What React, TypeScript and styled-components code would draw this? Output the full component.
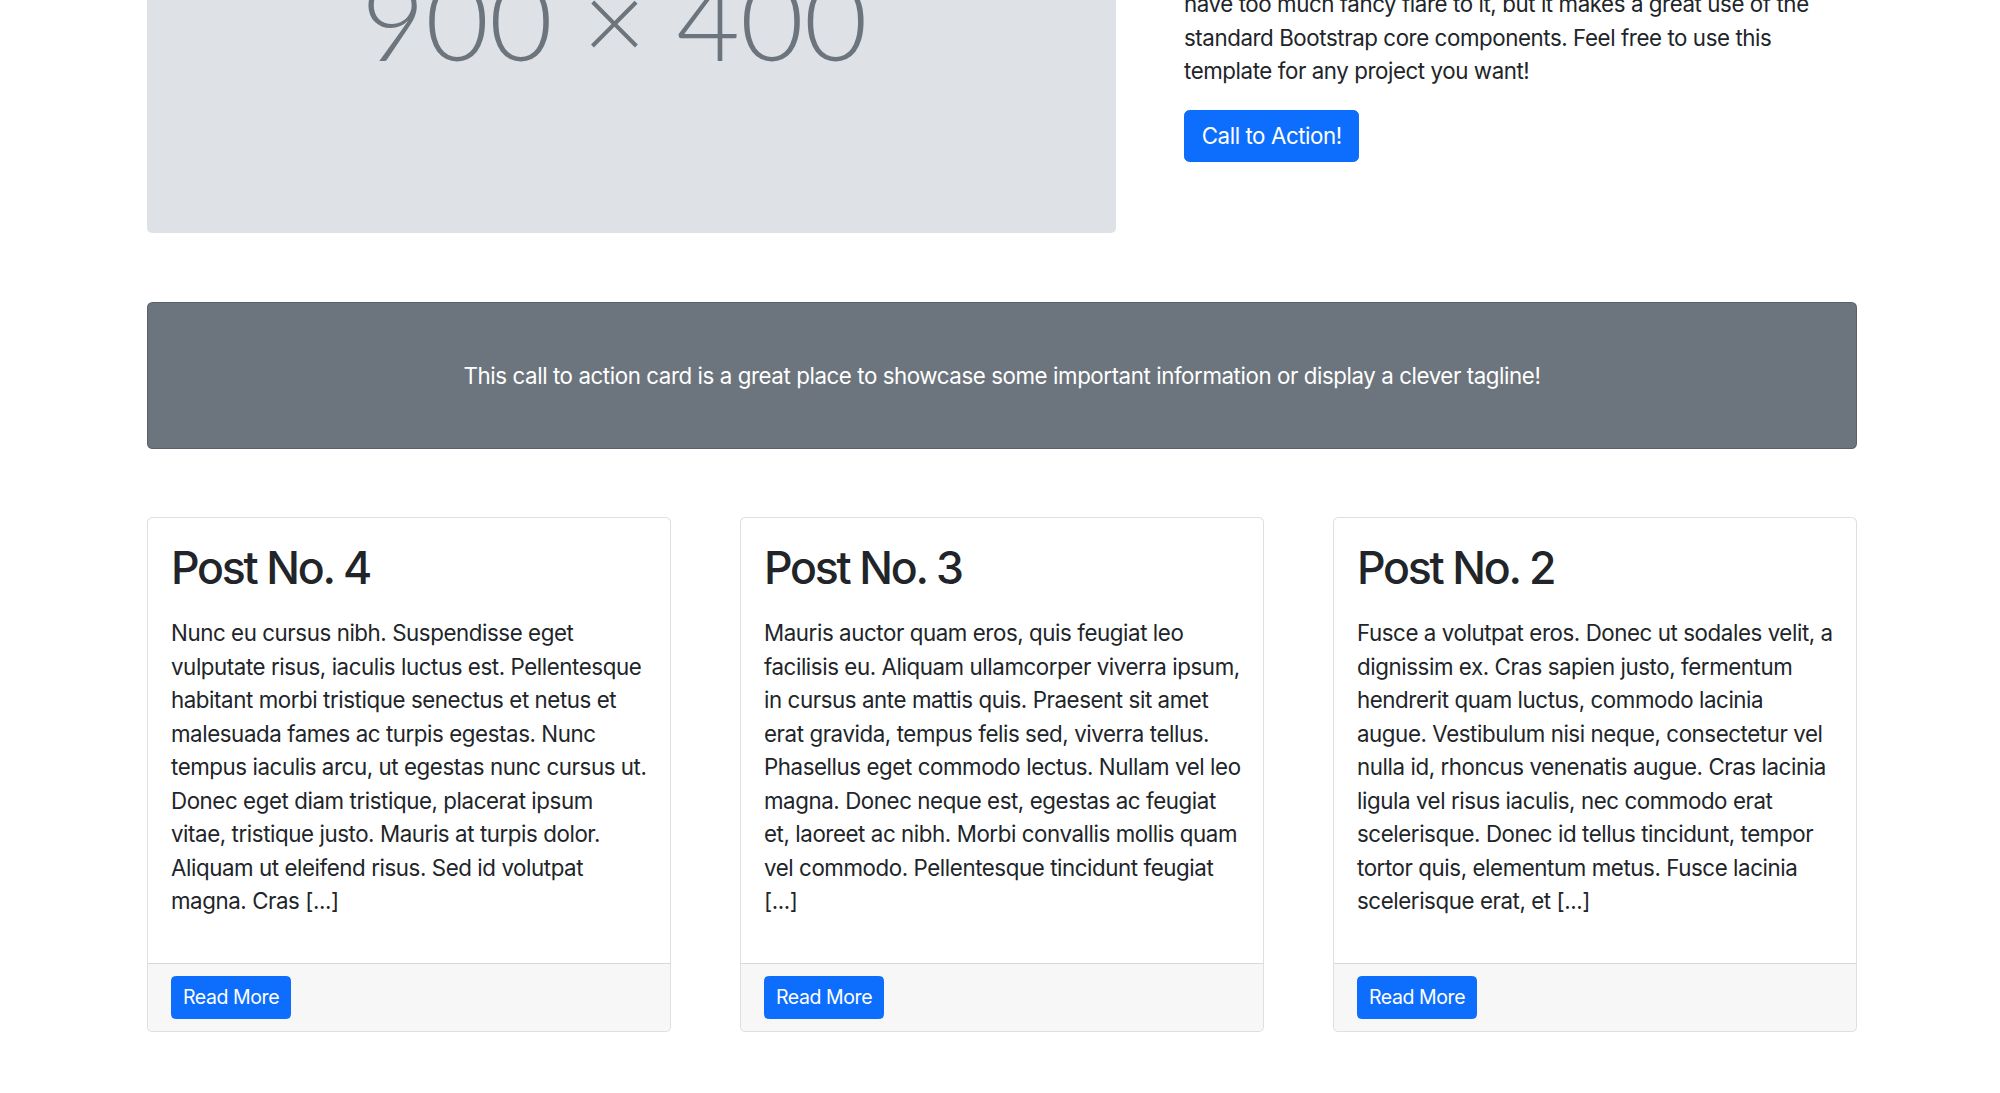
import React from "react";
import styled, { createGlobalStyle } from "styled-components";

const GlobalStyle = createGlobalStyle`
  * {
    box-sizing: border-box;
  }

  html,
  body {
    margin: 0;
    padding: 0;
    overflow: hidden;
    background: #fff;
  }

  body {
    font-family: Inter, "Noto Sans", "Liberation Sans", sans-serif;
    font-size: 22.3px;
    line-height: 1.5;
    letter-spacing: -0.42px;
    color: #212529;
  }
`;

const Page = styled.main`
  width: 1710px;
  margin: -198px 0 0 147px;
`;

const Hero = styled.section`
  display: grid;
  grid-template-columns: 969px 1fr;
  column-gap: 68px;
  align-items: center;
`;

const Placeholder = styled.div`
  height: 431px;
  display: flex;
  align-items: center;
  justify-content: center;
  padding-right: 34px;
  background-color: #dee2e6;
  border-radius: 5px;
  color: #6c757d;
  font-family: Lato, "Open Sans", sans-serif;
  font-weight: 300;
  font-size: 110px;
  line-height: 1;
  letter-spacing: 0;
`;

const Pitch = styled.div`
  display: flex;
  flex-direction: column;
  align-items: flex-start;
  padding-top: 3px;
`;

const PitchTitle = styled.h1`
  margin: 0 0 11px;
  font-size: 55.7px;
  font-weight: 300;
  line-height: 1.2;
`;

const PitchText = styled.p`
  margin: 0 0 22px;
`;

const Button = styled.a<{ $small?: boolean }>`
  display: inline-block;
  padding: ${({ $small }) => ($small ? "5.5px 11px" : "8.4px 16.7px")};
  font-size: ${({ $small }) => ($small ? "19.5px" : "22.3px")};
  line-height: 1.5;
  color: #fff;
  background-color: #0d6efd;
  border: 1px solid #0d6efd;
  border-radius: ${({ $small }) => ($small ? "4.5px" : "5.5px")};
  text-decoration: none;
  cursor: pointer;
`;

const Callout = styled.div`
  margin: 69px 0 68px;
  padding: 56px 22px;
  background-color: #6c757d;
  border: 1px solid rgba(0, 0, 0, 0.175);
  border-radius: 5.5px;
  color: #fff;
  text-align: center;

  p {
    margin: 0;
  }
`;

const Posts = styled.section`
  display: grid;
  grid-template-columns: repeat(3, 1fr);
  column-gap: 69px;
`;

const Card = styled.article`
  display: flex;
  flex-direction: column;
  background: #fff;
  border: 1px solid rgba(0, 0, 0, 0.125);
  border-radius: 5.5px;
  overflow: hidden;
`;

const CardBody = styled.div`
  flex: 1;
  padding: 24px 20px 23px 23px;
`;

const CardTitle = styled.h2`
  margin: 0 0 21px;
  font-size: 44.6px;
  font-weight: 500;
  line-height: 53px;
  letter-spacing: -0.05em;
`;

const CardText = styled.p`
  margin: 0 0 23px;
`;

const CardFooter = styled.div`
  padding: 12px 23px;
  background-color: #f7f7f7;
  border-top: 1px solid rgba(0, 0, 0, 0.125);
`;

const posts = [
  {
    title: "Post No. 4",
    text: "Nunc eu cursus nibh. Suspendisse eget vulputate risus, iaculis luctus est. Pellentesque habitant morbi tristique senectus et netus et malesuada fames ac turpis egestas. Nunc tempus iaculis arcu, ut egestas nunc cursus ut. Donec eget diam tristique, placerat ipsum vitae, tristique justo. Mauris at turpis dolor. Aliquam ut eleifend risus. Sed id volutpat magna. Cras [...]",
  },
  {
    title: "Post No. 3",
    text: "Mauris auctor quam eros, quis feugiat leo facilisis eu. Aliquam ullamcorper viverra ipsum, in cursus ante mattis quis. Praesent sit amet erat gravida, tempus felis sed, viverra tellus. Phasellus eget commodo lectus. Nullam vel leo magna. Donec neque est, egestas ac feugiat et, laoreet ac nibh. Morbi convallis mollis quam vel commodo. Pellentesque tincidunt feugiat [...]",
  },
  {
    title: "Post No. 2",
    text: "Fusce a volutpat eros. Donec ut sodales velit, a dignissim ex. Cras sapien justo, fermentum hendrerit quam luctus, commodo lacinia augue. Vestibulum nisi neque, consectetur vel nulla id, rhoncus venenatis augue. Cras lacinia ligula vel risus iaculis, nec commodo erat scelerisque. Donec id tellus tincidunt, tempor tortor quis, elementum metus. Fusce lacinia scelerisque erat, et [...]",
  },
];

const App = () => {
  return (
    <>
      <GlobalStyle />
      <Page>
        <Hero>
          <Placeholder>900 × 400</Placeholder>
          <Pitch>
            <PitchTitle>Business Name Pitch</PitchTitle>
            <PitchText>
              This is a template that is great for small businesses. It doesn't
              have too much fancy flare to it, but it makes a great use of the
              standard Bootstrap core components. Feel free to use this
              template for any project you want!
            </PitchText>
            <Button href="#!">Call to Action!</Button>
          </Pitch>
        </Hero>

        <Callout>
          <p>
            This call to action card is a great place to showcase some
            important information or display a clever tagline!
          </p>
        </Callout>

        <Posts>
          {posts.map((post) => (
            <Card key={post.title}>
              <CardBody>
                <CardTitle>{post.title}</CardTitle>
                <CardText>{post.text}</CardText>
              </CardBody>
              <CardFooter>
                <Button $small href="#!">
                  Read More
                </Button>
              </CardFooter>
            </Card>
          ))}
        </Posts>
      </Page>
    </>
  );
};

export default App;
